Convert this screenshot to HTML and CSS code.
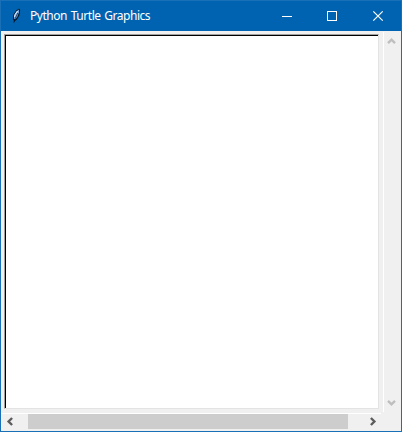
FILE: index.html
```html
<!DOCTYPE html>
<html lang="en">
<head>
<meta charset="utf-8">
<title>Python Turtle Graphics</title>
<link rel="stylesheet" href="styles.css">
</head>
<body>
<div class="window">
  <header class="titlebar">
    <svg class="feather" width="10" height="16" viewBox="0 0 10 16">
      <path d="M2.5 15 2.9 12.5 2 11.5 2.2 7 5 2.5 8 .6 9.2 2 8.4 7.5 6 11.5 4 13Z" fill="#07192d"/>
      <path d="M3 11 3.3 7 5.3 3.5 8 1.4 7.9 4.5 6.4 8.4 4.4 11.3Z" fill="#76aee8"/>
      <path d="M3.5 9 4.1 6.5 6.6 3" fill="none" stroke="#e2efff"/>
      <path d="M3 14.5 4.3 10.3 6.8 5" fill="none" stroke="#07192d" stroke-width=".7"/>
    </svg>
    <h1 class="title">Python Turtle Graphics</h1>
    <div class="controls">
      <svg width="45" height="29" viewBox="0 0 45 29" shape-rendering="crispEdges"><path d="M18 14.5h10" stroke="#fff"/></svg>
      <svg width="46" height="29" viewBox="0 0 46 29" shape-rendering="crispEdges"><path d="M18.5 9.5h9v9h-9z" fill="none" stroke="#fff"/></svg>
      <svg width="46" height="29" viewBox="0 0 46 29"><path d="m18.3 9.3 9.4 9.4m0-9.4-9.4 9.4" stroke="#fff" stroke-width="1.2"/></svg>
    </div>
  </header>
  <main class="client">
    <div class="canvas"></div>
    <div class="vscroll">
      <svg width="7" height="6" viewBox="0 0 7 6"><path d="M0 5.1 3.5 1.6 7 5.1" fill="none" stroke="#bfbfbf" stroke-width="2.4"/></svg>
      <svg width="7" height="6" viewBox="0 0 7 6"><path d="M0 .9 3.5 4.4 7 .9" fill="none" stroke="#bfbfbf" stroke-width="2.4"/></svg>
    </div>
    <div class="hscroll">
      <svg width="6" height="7" viewBox="0 0 6 7"><path d="M5.1 0 1.6 3.5 5.1 7" fill="none" stroke="#5c5c5c" stroke-width="2.4"/></svg>
      <div class="thumb"></div>
      <svg width="6" height="7" viewBox="0 0 6 7"><path d="M.9 0 4.4 3.5 .9 7" fill="none" stroke="#5c5c5c" stroke-width="2.4"/></svg>
    </div>
  </main>
</div>
</body>
</html>
```
FILE: styles.css
```css
* { box-sizing: border-box; }
body { margin: 0; }
svg { display: block; flex: none; overflow: visible; }
.window {
  width: 402px;
  height: 432px;
  border: 1px solid #1a70b7;
  background: #f0f0f0;
  font-family: "Noto Sans", "Open Sans", sans-serif;
}
.titlebar {
  display: flex;
  align-items: center;
  height: 30px;
  padding-left: 10px;
  background: #0063b1;
  color: #fff;
}
.feather { margin-top: -1px; }
.title {
  margin: 0 0 0 9px;
  font-size: 12px;
  font-weight: 400;
  line-height: 16px;
  letter-spacing: -.46px;
  word-spacing: 1px;
  white-space: nowrap;
}
.controls { display: flex; margin-left: auto; }
.client {
  display: grid;
  grid-template-columns: 382px 18px;
  grid-template-rows: 381px 19px;
  height: 400px;
}
.canvas {
  margin: 3px 4px 3px 3px;
  border: 1px solid;
  border-color: #a0a0a0 #e3e3e3 #e3e3e3 #a0a0a0;
  background: #fff;
  box-shadow: inset 1px 1px #000;
}
.vscroll {
  display: flex;
  flex-direction: column;
  justify-content: space-between;
  margin-top: 1px;
  padding: 6px 0 6px 4px;
  border-left: 1px solid #fff;
}
.hscroll {
  display: flex;
  align-items: center;
  width: 380px;
  height: 18px;
  margin-top: 1px;
  padding: 0 5px 2px 6px;
  border-top: 1px solid #fff;
}
.thumb { width: 320px; height: 15px; margin: 0 auto 0 15px; background: #cdcdcd; }
```
